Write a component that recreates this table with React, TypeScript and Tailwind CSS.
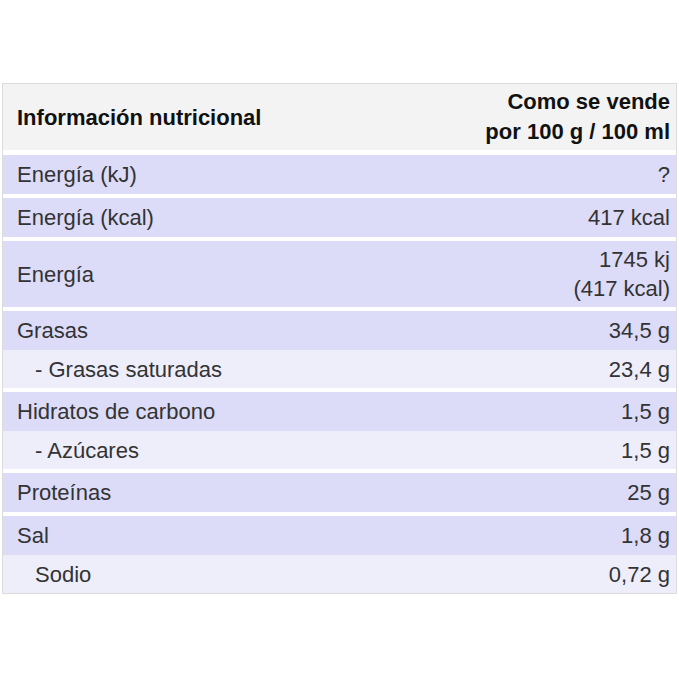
const groups: { label: string; value: string[]; sub?: boolean; tall?: boolean }[][] = [
  [{ label: 'Energía (kJ)', value: ['?'] }],
  [{ label: 'Energía (kcal)', value: ['417 kcal'] }],
  [{ label: 'Energía', value: ['1745 kj', '(417 kcal)'], tall: true }],
  [
    { label: 'Grasas', value: ['34,5 g'] },
    { label: '- Grasas saturadas', value: ['23,4 g'], sub: true },
  ],
  [
    { label: 'Hidratos de carbono', value: ['1,5 g'] },
    { label: '- Azúcares', value: ['1,5 g'], sub: true },
  ],
  [{ label: 'Proteínas', value: ['25 g'] }],
  [
    { label: 'Sal', value: ['1,8 g'] },
    { label: 'Sodio', value: ['0,72 g'], sub: true },
  ],
]

export default function App() {
  return (
    <div
      className="w-[679px] h-[679px] bg-white pt-[83px] pl-[2px] text-[22px] text-[#333]"
      style={{ fontFamily: '"Liberation Sans", Arial, sans-serif' }}
    >
      <div className="w-[675px] border border-[#dcdcdc] bg-white flex flex-col gap-[4px]">
        <div className="flex items-center justify-between bg-[#f3f3f3] h-[66px] pl-[14px] pr-[6px] mb-[1px]">
          <span className="font-bold text-[#111]">Información nutricional</span>
          <span className="font-bold text-[#111] text-right leading-[30px]">
            Como se vende
            <br />
            por 100 g / 100 ml
          </span>
        </div>
        {groups.map((g, gi) => (
          <div key={gi} className="flex flex-col">
            {g.map((r) => (
              <div
                key={r.label}
                className={`flex items-center justify-between pr-[6px] ${
                  r.tall ? 'h-[66px]' : r.sub ? 'h-[38px]' : 'h-[39px]'
                } ${r.sub ? 'bg-[#eeeefb] pl-[32px]' : 'bg-[#dcdcf8] pl-[14px]'}`}
              >
                <span>{r.label}</span>
                <span className="text-right leading-[29px]">
                  {r.value.map((v, i) => (
                    <div key={i}>{v}</div>
                  ))}
                </span>
              </div>
            ))}
          </div>
        ))}
      </div>
    </div>
  )
}
